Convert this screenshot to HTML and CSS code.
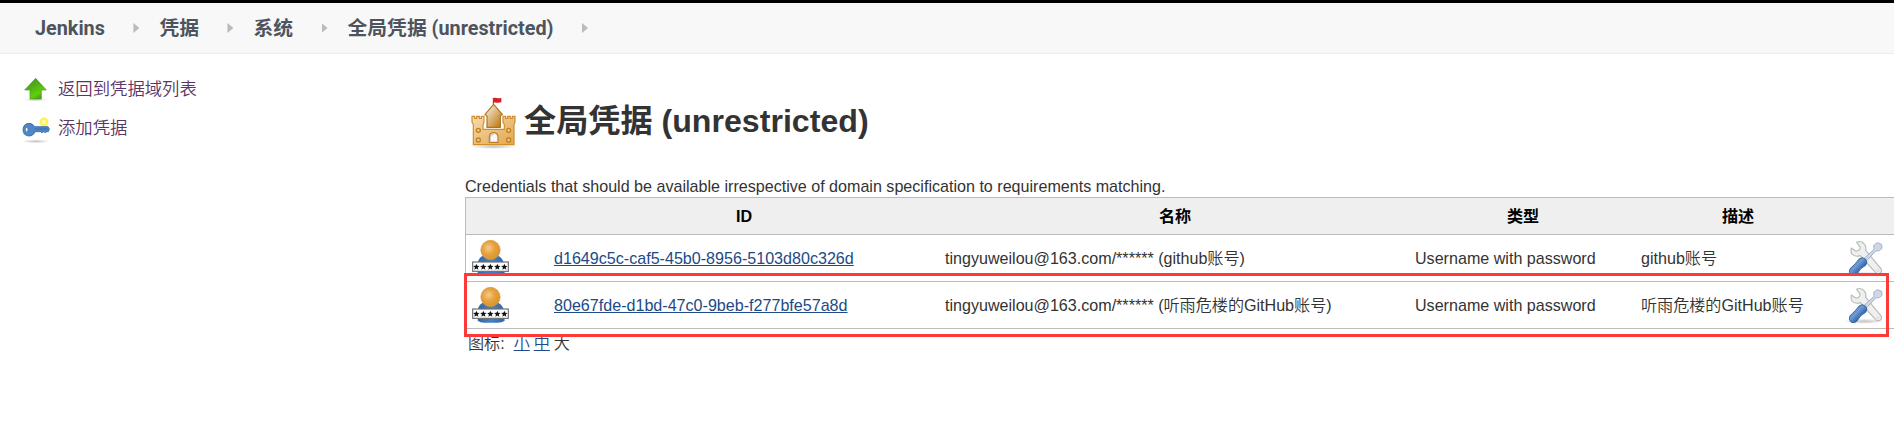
FILE: index.html
```html
<!DOCTYPE html>
<html lang="zh-CN">
<head>
<meta charset="utf-8">
<title>全局凭据 (unrestricted) [Jenkins]</title>
<link rel="stylesheet" href="styles.css">
</head>
<body>
<svg class="defs" width="0" height="0" aria-hidden="true">
  <defs>
    <radialGradient id="head" cx=".4" cy=".4" r=".65"><stop offset="0" stop-color="#f6cc8c"/><stop offset=".5" stop-color="#e6a13c"/><stop offset="1" stop-color="#d8942a"/></radialGradient>
    <linearGradient id="suit" x1="0" x2="1" y1="0" y2="0"><stop offset="0" stop-color="#3565a8"/><stop offset=".5" stop-color="#4a80c2"/><stop offset="1" stop-color="#3565a8"/></linearGradient>
    <linearGradient id="leaf" x1="0" x2="0.6" y1="0" y2="1"><stop offset="0" stop-color="#43951a"/><stop offset=".45" stop-color="#4fae18"/><stop offset=".8" stop-color="#62cf0c"/><stop offset="1" stop-color="#4ba512"/></linearGradient>
    <linearGradient id="tower" x1="0" x2="1" y1="0" y2="1"><stop offset="0" stop-color="#fdf9f2"/><stop offset=".9" stop-color="#c07c18"/></linearGradient>
    <linearGradient id="wall" x1="0" x2="1" y1="0" y2="1"><stop offset="0" stop-color="#f5dcae"/><stop offset="1" stop-color="#e3a54b"/></linearGradient>
    <linearGradient id="grip" x1="0" x2="1" y1="0" y2="1"><stop offset="0" stop-color="#2f61aa"/><stop offset=".42" stop-color="#6f9cd3"/><stop offset=".65" stop-color="#3468b0"/><stop offset="1" stop-color="#27569d"/></linearGradient>
    <radialGradient id="shade"><stop offset="0" stop-color="#000" stop-opacity=".24"/><stop offset="1" stop-color="#000" stop-opacity="0"/></radialGradient>
    <symbol id="user" viewBox="0 156 138 138">
      <path d="M38 272V240Q42 221 58 217H95Q110 221 117 240L119 272Q112 278 98 278H58Q45 278 38 272Z" fill="url(#suit)"/>
      <circle cx="76.500" cy="201" r="29" fill="url(#head)" stroke="#d3973a" stroke-width="2"/>
      <rect x="23" y="237" width="107" height="28" fill="#fff" stroke="#6b7074" stroke-width="3.500"/>
      <g fill="#111">
        <path id="star" d="M34 242l2.600 6.500 7 .5-5.400 4.400 1.900 7-6.100-3.900-6.100 3.900 1.900-7-5.400-4.400 7-.5Z"/>
        <use href="#star" x="21"/><use href="#star" x="42"/><use href="#star" x="63"/><use href="#star" x="84"/>
      </g>
    </symbol>
    <symbol id="tools" viewBox="57 276 138 138">
      <ellipse cx="132" cy="394" rx="62" ry="8" fill="url(#shade)"/>
      <path d="M110 298Q117 293 127 298Q140 307 137 322L182 376Q188 384 181 390Q173 395 166 388L121 338Q104 343 96 333Q91 326 94 315L107 324Q114 325 118 320Q122 315 119 310Z" fill="#eeefee" stroke="#b9bbbb" stroke-width="3.500" stroke-linejoin="round"/>
      <circle cx="174" cy="383" r="3" fill="#fff" stroke="#bbb" stroke-width="1.500"/>
      <path d="M132 347L162 319L161 307L172 299L185 304L186 316L178 323L167 324L139 354Z" fill="#ccd8e6" stroke="#a3b4c8" stroke-width="3" stroke-linejoin="round"/>
      <path d="M118 347Q128 340 137 349Q144 357 137 367Q119 376 112 392Q104 401 94 397Q84 389 90 377Q107 363 118 347Z" fill="url(#grip)" stroke="#2b5797" stroke-width="2.500"/>
    </symbol>
  </defs>
</svg>

<header class="topline">
  <nav class="crumbs">
    <a class="crumb">Jenkins</a><i class="chev"></i>
    <a class="crumb">凭据</a><i class="chev"></i>
    <a class="crumb">系统</a><i class="chev"></i>
    <a class="crumb">全局凭据 (unrestricted)</a><i class="chev"></i>
  </nav>
</header>

<div class="page">
  <aside class="side">
    <a class="task">
      <svg width="42" height="39" viewBox="0 0 126 117">
        <ellipse cx="62" cy="89" rx="36" ry="5" fill="url(#shade)"/>
        <path d="M62 25L94 60H79V87H45V60H29Z" fill="url(#leaf)" stroke="#4c9a24" stroke-width="2" stroke-linejoin="round"/>
      </svg>
      <span class="task-name">返回到凭据域列表</span>
    </a>
    <a class="task">
      <svg width="42" height="39" viewBox="0 117 126 117">
        <ellipse cx="62" cy="214" rx="42" ry="6" fill="url(#shade)"/>
        <circle cx="87" cy="156" r="10" fill="#fffbb0" stroke="#fdf25c" stroke-width="7"/>
        <path d="M42 160Q53 160 59 170L99 170L103 177L100 185H95L91 188L86 185L81 188L76 185H60Q55 198 42 198Q24 197 24 179Q25 161 42 160Z" fill="#4f86c6" stroke="#3566a5" stroke-width="2.500" stroke-linejoin="round"/>
        <path d="M58 177H98" stroke="#2f5f9f" stroke-width="2"/>
        <ellipse cx="35" cy="179" rx="4" ry="6.500" fill="#fff" stroke="#3566a5" stroke-width="2"/>
      </svg>
      <span class="task-name">添加凭据</span>
    </a>
  </aside>

  <main class="main">
    <h1 class="title">
      <svg width="60" height="60" viewBox="3 0 180 180">
        <ellipse cx="89" cy="170" rx="70" ry="7" fill="url(#shade)"/>
        <path d="M88 24V44" stroke="#a33" stroke-width="3"/>
        <path d="M87 24Q93 22 99 24T112 23V37Q105 39 99 38T87 38Z" fill="#d81e27"/>
        <path d="M28 164V103L24 97V79H32V85H38V79H46V85H52V79H60V97L57 103V118H121V103L117 97V79H125V85H131V79H139V85H145V79H153V97L150 103V164Z" fill="url(#wall)" stroke="#d08d2c" stroke-width="3.500"/>
        <path d="M89 43L115 73L109 78V112H69V78L63 73Z" fill="url(#tower)" stroke="#ad751c" stroke-width="3.500"/>
        <path d="M76 157V141Q77 128 89 128Q101 128 102 141V157Z" fill="#f9f9fb" stroke="#bd7d22" stroke-width="3.500"/>
        <path d="M79 153V142Q81 132 91 132" fill="none" stroke="#bfc0c8" stroke-width="3"/>
        <g fill="#edc98e" stroke="#c27f1d" stroke-width="4">
          <circle cx="43" cy="121" r="6"/><circle cx="43" cy="150" r="6"/><circle cx="134" cy="121" r="6"/><circle cx="134" cy="150" r="6"/>
        </g>
      </svg>
      <span class="title-text">全局凭据 (unrestricted)</span>
    </h1>
    <p class="desc">Credentials that should be available irrespective of domain specification to requirements matching.</p>
    <table class="creds">
      <colgroup><col class="c-icon"><col class="c-id"><col class="c-name"><col class="c-kind"><col class="c-desc"><col class="c-tool"></colgroup>
      <thead>
        <tr><th></th><th>ID</th><th>名称</th><th>类型</th><th>描述</th><th></th></tr>
      </thead>
      <tbody>
        <tr>
          <td class="pic user"><svg width="46" height="46"><use href="#user"/></svg></td>
          <td class="id"><a class="link">d1649c5c-caf5-45b0-8956-5103d80c326d</a></td>
          <td>tingyuweilou@163.com/****** (github账号)</td>
          <td class="kind">Username with password</td>
          <td>github账号</td>
          <td class="pic"><svg width="46" height="46"><use href="#tools"/></svg></td>
        </tr>
        <tr>
          <td class="pic user"><svg width="46" height="46"><use href="#user"/></svg></td>
          <td class="id"><a class="link">80e67fde-d1bd-47c0-9beb-f277bfe57a8d</a></td>
          <td>tingyuweilou@163.com/****** (听雨危楼的GitHub账号)</td>
          <td class="kind">Username with password</td>
          <td>听雨危楼的GitHub账号</td>
          <td class="pic"><svg width="46" height="46"><use href="#tools"/></svg></td>
        </tr>
      </tbody>
    </table>
    <div class="sizes"><span class="label">图标:</span><a class="link">小</a><a class="link">中</a><span>大</span></div>
    <div class="highlight"></div>
  </main>
</div>
</body>
</html>
```
FILE: styles.css
```css
* { box-sizing: border-box; }
body {
  margin: 0;
  height: 441px;
  overflow: hidden;
  background: #fff;
  color: #333;
  font: 350 16.100px/20px "Liberation Sans", "Noto Sans CJK SC", sans-serif;
}
.defs { position: absolute; }
.topline {
  height: 54px;
  border-top: 3px solid #000;
  border-bottom: 1px solid #ececec;
  background: #f8f8f8;
}
.crumbs {
  display: flex;
  align-items: center;
  height: 50px;
  padding-left: 35px;
  font: 700 19.800px/50px Roboto, "Noto Sans CJK SC", sans-serif;
  color: #4d545d;
}
.crumb { padding-top: 2px; white-space: nowrap; }
.chev {
  width: 6px;
  height: 10px;
  margin: 0 20px 0 28.500px;
  background: #bbb;
  clip-path: polygon(0 0, 100% 50%, 0 100%);
}
.page { display: flex; }
.side { width: 465px; padding: 16px 0 0 15px; }
.task {
  display: flex;
  align-items: center;
  gap: 1px;
  height: 39px;
  font-size: 17.350px;
  color: #5c3566;
}
.task-name { padding-bottom: 2px; }
.main { position: relative; flex: none; width: 1429px; padding-top: 36px; }
.title {
  display: flex;
  align-items: center;
  height: 60px;
  margin: 0;
  font: 700 32.150px/60px "Liberation Sans", "Noto Sans CJK SC", sans-serif;
}
.title-text { padding-top: 2px; margin-left: -1px; }
.desc { height: 21px; margin: 26px 0 0; }
.creds {
  width: 1429px;
  table-layout: fixed;
  border-collapse: separate;
  border-spacing: 0;
  border: solid #bbb;
  border-width: 1px 0 0 1px;
}
.c-icon { width: 81px; }
.c-id { width: 394px; }
.c-name { width: 468px; }
.c-kind { width: 228px; }
.c-desc { width: 202px; }
.creds th {
  height: 37px;
  padding: 0 0 1px;
  border-bottom: 1px solid #bbb;
  background: #efefef;
  color: #000;
}
.creds td {
  height: 47px;
  padding: 0 0 1px 4px;
  border-bottom: 1px solid #bbb;
  white-space: nowrap;
}
.creds .id { padding-left: 7px; }
.creds .kind { padding-left: 6px; }
.creds .pic { padding: 0; }
.pic svg { display: block; }
.user svg { margin-left: -1px; }
.link { color: #204a87; text-decoration: underline; }
.sizes { display: flex; gap: 4px; margin-top: 4px; padding-left: 3px; }
.label { margin-right: 5px; }
.highlight {
  position: absolute;
  left: -1px;
  top: 219px;
  width: 1425px;
  height: 64px;
  border: 3px solid #ff3838;
}
```
